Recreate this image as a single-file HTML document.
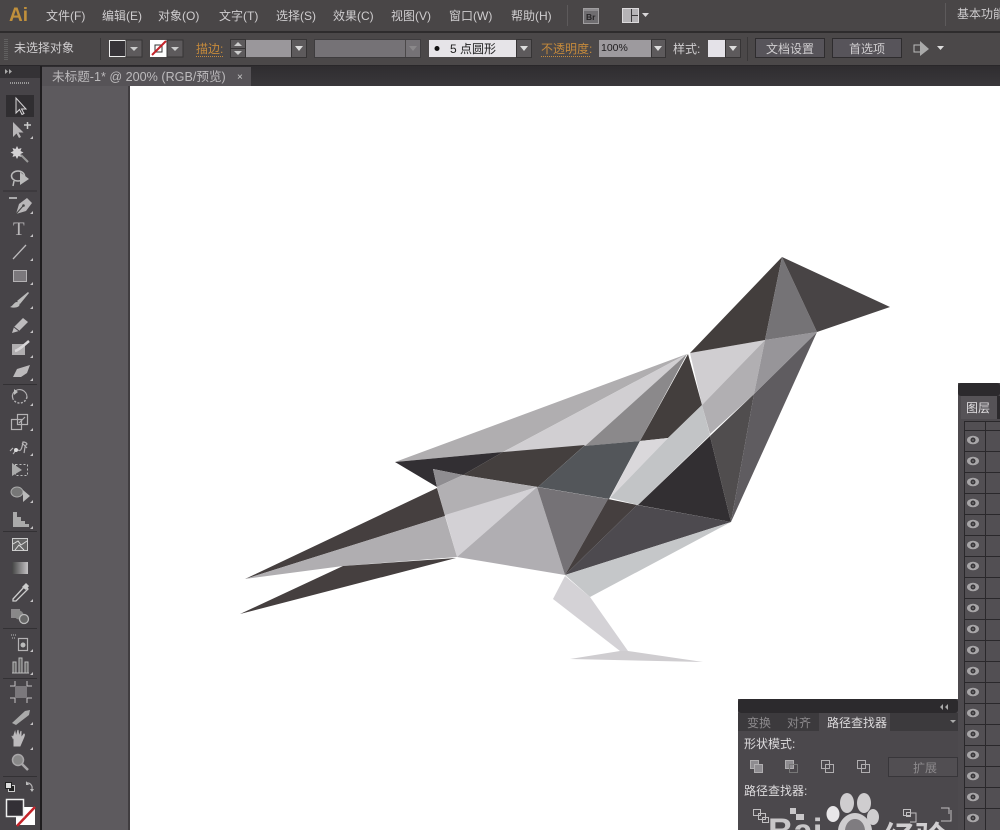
<!DOCTYPE html>
<html lang="zh"><head><meta charset="utf-8"><title>Illustrator</title>
<style>
html,body{margin:0;padding:0;background:#fff;width:1000px;height:830px;overflow:hidden}
svg{display:block}
text{font-family:"Liberation Sans","Noto Sans CJK SC",sans-serif;font-size:12px;fill:#cfcdcf}
.t{fill:#8c898c}
.o{fill:#c58a3c}
.s{fill:none;stroke:#b4b2b4;stroke-width:1.2}
</style></head><body>
<svg width="1000" height="830" viewBox="0 0 1000 830" xmlns="http://www.w3.org/2000/svg">
<!-- canvas -->
<rect width="1000" height="830" fill="#fff"/>
<rect x="42" y="86" width="88" height="744" fill="#5d5a5e"/>
<rect x="128" y="86" width="2" height="744" fill="#403d40"/>
<!-- menu bar -->
<rect width="1000" height="32" fill="#494647"/>
<rect y="31" width="1000" height="2" fill="#2e2c2d"/>
<text x="9" y="21" style="font-size:19px;font-weight:bold;fill:#c0903c">Ai</text>
<text x="46" y="20">文件(F)</text><text x="102" y="20">编辑(E)</text><text x="158" y="20">对象(O)</text><text x="219" y="20">文字(T)</text><text x="276" y="20">选择(S)</text><text x="333" y="20">效果(C)</text><text x="391" y="20">视图(V)</text><text x="449" y="20">窗口(W)</text><text x="511" y="20">帮助(H)</text>
<rect x="567" y="5" width="1" height="21" fill="#5d5a5b"/>
<rect x="583.500" y="8.500" width="15" height="15" fill="#6f6d70" stroke="#a09ea0"/>
<rect x="584" y="9" width="14" height="2" fill="#8e8c8f"/>
<text x="586" y="20" style="font-size:8.500px;font-weight:bold;fill:#262426">Br</text>
<rect x="622.500" y="8.500" width="16" height="14" fill="#b5b3b6" stroke="#dcdadc"/>
<path d="M631.500 9v13M632 15.500h6" stroke="#3a383a" fill="none"/>
<path d="M642 13h7l-3.500 4z" fill="#d8d6d8"/>
<rect x="945" y="3" width="1" height="23" fill="#5d5a5b"/>
<text x="957" y="18">基本功能</text>
<!-- control bar -->
<rect y="33" width="1000" height="32" fill="#4b4849"/>
<rect y="65" width="1000" height="1.500" fill="#29272a"/>
<path d="M5 39v21M7 39v21" stroke="#777" stroke-dasharray="1 1" fill="none"/>
<text x="14" y="52">未选择对象</text>
<rect x="100" y="38" width="1" height="22" fill="#3a3839"/>
<rect x="109.500" y="40.500" width="16" height="16" fill="#363338" stroke="#eee"/>
<rect x="126" y="40" width="16" height="17" fill="#5d5a5c" stroke="#363435"/><path d="M130 47h8l-4 4z" fill="#ccc"/>
<rect x="150" y="40" width="17" height="17" fill="#fff"/><rect x="155" y="45" width="7" height="7" fill="none" stroke="#333"/><path d="M152 55L166 41" stroke="#c4242a" stroke-width="2"/>
<rect x="167" y="40" width="16" height="17" fill="#5d5a5c" stroke="#363435"/><path d="M171 47h8l-4 4z" fill="#ccc"/>
<text x="196" y="53" class="o">描边:</text>
<path d="M196 56.500h28" stroke="#c58a3c" stroke-dasharray="1 1"/>
<rect x="230.500" y="39.500" width="15" height="18" fill="#5d5a5c" stroke="#363435"/><path d="M234 46l4-4 4 4zM234 51l4 4 4-4z" fill="#ccc"/><path d="M231 48.500h14" stroke="#363435"/>
<rect x="246" y="40" width="45" height="17" fill="#9a979b"/>
<rect x="291.500" y="39.500" width="15" height="18" fill="#5d5a5c" stroke="#363435"/><path d="M295 46h8l-4 5z" fill="#ddd"/>
<rect x="314.500" y="39.500" width="106" height="18" fill="#757276" stroke="#3e3c3e"/><rect x="405" y="40" width="1" height="17" fill="#4b4849"/><path d="M409 46h8l-4 5z" fill="#8a888a"/>
<rect x="429" y="40" width="87" height="17" fill="#e6e4e8"/>
<circle cx="437" cy="48.500" r="2.500" fill="#111"/>
<text x="450" y="53" style="fill:#222">5 点圆形</text>
<rect x="516.500" y="39.500" width="15" height="18" fill="#5d5a5c" stroke="#363435"/><path d="M520 46h8l-4 5z" fill="#ddd"/>
<text x="541" y="53" class="o">不透明度:</text>
<path d="M541 56.500h50" stroke="#c58a3c" stroke-dasharray="1 1"/>
<rect x="599" y="40" width="52" height="17" fill="#9d9a9e"/>
<text x="601" y="51" style="font-size:10.500px;fill:#1e1c1e">100%</text>
<rect x="651.500" y="39.500" width="14" height="18" fill="#5d5a5c" stroke="#363435"/><path d="M654 46h8l-4 5z" fill="#ddd"/>
<text x="673" y="53">样式:</text>
<rect x="708" y="40" width="17" height="17" fill="#e4e2e8"/>
<rect x="725.500" y="39.500" width="15" height="18" fill="#5d5a5c" stroke="#363435"/><path d="M729 46h8l-4 5z" fill="#ddd"/>
<rect x="747" y="37" width="1" height="24" fill="#3a3839"/>
<rect x="755.500" y="38.500" width="69" height="19" fill="#57545a" stroke="#2e2c2e"/>
<text x="766" y="53">文档设置</text>
<rect x="832.500" y="38.500" width="69" height="19" fill="#57545a" stroke="#2e2c2e"/>
<text x="849" y="53">首选项</text>
<rect x="914" y="45" width="7" height="7" fill="none" stroke="#bbb"/><path d="M920 41l9 8-9 7z" fill="#aaa"/><path d="M937 46h7l-3.500 4z" fill="#ddd"/>
<!-- doc tab row -->
<defs><linearGradient id="d" x1="0" y1="0" x2="0" y2="1"><stop offset="0" stop-color="#2f2d30"/><stop offset="1" stop-color="#39373a"/></linearGradient></defs>
<rect y="66" width="1000" height="20" fill="url(#d)"/>
<rect x="42" y="67" width="209" height="19" fill="#565357"/>
<text x="52" y="81" style="font-size:12.600px;fill:#bcbabc">未标题-1* @ 200% (RGB/预览)</text>
<text x="237" y="80" style="font-size:10px;fill:#ccc">×</text>
<!-- toolbar -->
<rect y="66" width="40" height="764" fill="#474448"/>
<rect y="66" width="40" height="12" fill="#343235"/>
<path d="M5 69l3 2.500-3 2.500zM9 69l3 2.500-3 2.500z" fill="#aaa"/>
<rect x="40" y="66" width="2" height="764" fill="#1f1d1f"/>
<path d="M10 83h19" stroke="#999" stroke-dasharray="1 1" stroke-width="2"/>
<rect x="6" y="95" width="28" height="22" fill="#302e31"/>
<path d="M16 98v15l3.500-3.500 2.500 5 2-1-2.500-4.500h4.500z" fill="#3b393c" stroke="#d8d6d8"/>
<path d="M13 122v15l3.500-3.500 2.500 4.500 2-1-2.500-4.500h5z" fill="#b8b6b8"/><path d="M24 125h7M27.500 122v7" stroke="#ccc" stroke-width="1.500"/>
<path d="M17 146l1.500 3 3-1-1 3 3 1.500-3 1.500 1 3-3-1-1.500 3-1.500-3-3 1 1-3-3-1.500 3-1.500-1-3 3 1z" fill="#d4d2d4"/><path d="M21 155l7 7" stroke="#999" stroke-width="2"/>
<ellipse cx="18" cy="176" rx="6.500" ry="5" fill="none" stroke="#bbb" stroke-width="1.500"/><path d="M20 172l9 7-9 6z" fill="#bbb"/><path d="M14 181l-1 5" stroke="#bbb" stroke-width="1.500"/>
<rect x="3" y="190.500" width="34" height="1" fill="#333134"/>
<path d="M9 198h8" stroke="#ccc" stroke-width="1.500"/><path d="M16 214l3-10 8-6 5 5-6 8z" fill="#b8b6b8"/><path d="M16 214l7-8" stroke="#444"/><circle cx="23.500" cy="205.500" r="1.300" fill="#444"/>
<text x="13" y="235" style="font-family:'Liberation Serif',serif;font-size:19px;fill:#b8b6b8">T</text>
<path d="M13 259l13-14" stroke="#bdbbbd" stroke-width="1.300"/>
<rect x="13.500" y="270.500" width="13" height="11" fill="#7b787c" stroke="#b4b2b4"/>
<path d="M28 292l1 1-9 11-3-3zM17 302c3 0 3 3 2 4-2 2-6 2-9 1 3-1 4-5 7-5z" fill="#bbb"/>
<path d="M12 333l2-6 9-9 5 4-9 9z" fill="#bdbbbd"/><path d="M14 327l5 4" stroke="#474448"/>
<path d="M12 344h13v11H12z" fill="#b0aeb0"/><path d="M15 351c4-1 8-5 14-10" stroke="#d8d6d8" stroke-width="2.500" fill="none"/>
<path d="M13 377l4-8 13-4-3 8-6 4z" fill="#bcbabc"/>
<rect x="3" y="384" width="34" height="1" fill="#333134"/>
<path d="M14 392a7.500 7.500 0 0 1 13 5" class="s"/><path d="M27 397a7.500 7.500 0 0 1-14 2" fill="none" stroke="#b4b2b4" stroke-width="1.400" stroke-dasharray="2 1.500"/><path d="M13 399a7 7 0 0 1 1-7" class="s"/><path d="M14 389l4 3-4 3z" fill="#bbb"/>
<rect x="11.500" y="419.500" width="10" height="10" class="s"/><rect x="17.500" y="414.500" width="10" height="10" class="s"/><path d="M19 423l6-6" class="s"/>
<path d="M13 454c3-3 2-6 5-4 3 2 4-2 5-8 1 0 3 0 4 2-3 2-2 6-3 9" class="s" stroke-width="2"/><circle cx="16" cy="450" r="2" fill="#ddd"/><path d="M10 451l3-3M22 443l5 5" class="s"/>
<rect x="15.500" y="464.500" width="12" height="11" fill="none" stroke="#bbb" stroke-dasharray="2 2"/><path d="M12 463l10 7-10 6z" fill="#aaa"/>
<ellipse cx="17" cy="492" rx="6" ry="5" fill="#777" stroke="#aaa"/><path d="M23 490l7 6-7 6z" fill="#bbb"/>
<path d="M13 512h4v15h-4zM17 517h4v10h-4zM21 521h4v6h-4zM25 524h4v3h-4z" fill="#aaa"/>
<rect x="3" y="531" width="34" height="1" fill="#333134"/>
<rect x="12.500" y="538.500" width="15" height="12" fill="#666" stroke="#ccc"/><path d="M13 544l5-3 3 4 6-4M15 550l4-5 5 5" stroke="#ddd" fill="none"/>
<defs><linearGradient id="g"><stop offset="0" stop-color="#444"/><stop offset="1" stop-color="#c4c2c4"/></linearGradient></defs>
<rect x="12" y="562" width="16" height="12" fill="url(#g)"/>
<path d="M13 599l12-13 3 3-12 12-3 0z" fill="none" stroke="#ccc" stroke-width="1.300"/><path d="M22 587l4-4 3 3-3 4z" fill="#ccc"/>
<rect x="11" y="609" width="9" height="9" fill="#8a888a"/><circle cx="19" cy="615" r="4.500" fill="#888"/><circle cx="24" cy="619" r="4.500" fill="#666" stroke="#bbb" stroke-width="1.300"/>
<rect x="3" y="628" width="34" height="1" fill="#333134"/>
<rect x="18.500" y="638.500" width="9" height="12" class="s"/><circle cx="23" cy="645" r="2.500" fill="#bbb"/><path d="M11 635h6M12 638h4" stroke="#bbb" stroke-dasharray="1 1"/>
<path d="M13 673v-11h3v11zM19 673v-15h3v15zM25 673v-11h3v11z" fill="#666" stroke="#bbb"/><path d="M12 673h17" stroke="#bbb"/>
<rect x="3" y="678" width="34" height="1" fill="#333134"/>
<rect x="15" y="686" width="12" height="12" fill="#7b787c"/><path d="M10 686h22M10 698h22M15 681v22M27 681v22" stroke="#c4c2c4" stroke-dasharray="5 12"/>
<path d="M12 723l13-12 5-1-1 5-13 10z" fill="#aaa"/>
<path d="M14 738c-3-2-2-3-1 0l2-6 1 5 2-7 1 7 2-6v7l3-4c1 0 0 3-1 5l-3 7h-6z" fill="#bcbabc" stroke="#bcbabc"/>
<circle cx="18" cy="760" r="5.500" fill="#888" stroke="#a8a6a8" stroke-width="1.500"/><path d="M22 764l6 6" stroke="#a8a6a8" stroke-width="2.500"/>
<rect x="3" y="776" width="34" height="1" fill="#333134"/>
<!-- flyout corner marks -->
<path fill="#c4c2c4" d="M33 136v3h-3zM33 211v3h-3zM33 234v3h-3zM33 258v3h-3zM33 282v3h-3zM33 306v3h-3zM33 330v3h-3zM33 355v3h-3zM33 378v3h-3zM33 403v3h-3zM33 428v3h-3zM33 453v3h-3zM33 500v3h-3zM33 526v3h-3zM33 599v3h-3zM33 649v3h-3zM33 672v3h-3zM33 722v3h-3zM33 747v3h-3z"/>
<rect x="8.500" y="785.500" width="6" height="6" fill="#222" stroke="#ccc"/><rect x="5.500" y="782.500" width="6" height="6" fill="#ddd" stroke="#222"/>
<path d="M26 783a5 5 0 0 1 6 6" class="s"/><path d="M26 781v4h3zM30 789h4l-2 3z" fill="#bbb"/>
<rect x="16" y="807" width="19" height="18" fill="#fff"/><path d="M17 826l18-19" stroke="#c4242a" stroke-width="2.500"/>
<rect x="6.500" y="799.500" width="17" height="17" fill="#333036" stroke="#eee" stroke-width="1.500"/>
<!-- bird -->
<g shape-rendering="geometricPrecision">
<path d="M395 462L687 354 503 452z" fill="#b0aeb0"/>
<path d="M503 452L687 354 585 446z" fill="#d1cfd2"/>
<path d="M585 446L687 354 640 441z" fill="#8b898b"/>
<path d="M640 441L688 354 702 405 668 438z" fill="#433e3d"/>
<path d="M395 462L503 452 463 475 433 469 437 487z" fill="#322f33"/>
<path d="M503 452L585 445 538 487 463 475z" fill="#443f3e"/>
<path d="M584 446L640 441 609 499 538 487z" fill="#53565a"/>
<path d="M640 441L668 438 610 498z" fill="#dad8db"/>
<path d="M702 405L710 435 638 505 610 498 668 438z" fill="#c2c4c6"/>
<path d="M710 436L731 522 638 505z" fill="#322f32"/>
<path d="M710 436L754 394 731 522z" fill="#504d4e"/>
<path d="M817 332L731 522 754 394z" fill="#5f5c60"/>
<path d="M690 353L765 340 702 405z" fill="#d0ced1"/>
<path d="M765 340L754 394 710 434 702 405z" fill="#b1afb2"/>
<path d="M765 340L817 332 754 394z" fill="#979599"/>
<path d="M690 353L782 257 765 340z" fill="#433e3d"/>
<path d="M782 257L817 332 765 340z" fill="#757376"/>
<path d="M782 257L890 307 817 332z" fill="#484445"/>
<path d="M433 469L463 475 437 487z" fill="#8f8d91"/>
<path d="M463 475L537 487 445 516 437 487z" fill="#b2b0b3"/>
<path d="M445 515L537 487 457 557z" fill="#d3d1d5"/>
<path d="M537 487L457 557 565 575z" fill="#b0aeb2"/>
<path d="M537 487L608 499 565 575z" fill="#757276"/>
<path d="M608 499L637 505 565 575z" fill="#453f3f"/>
<path d="M637 505L731 522 565 575z" fill="#4d4a4f"/>
<path d="M731 522L565 575 590 597z" fill="#c5c7c9"/>
<path d="M565 576L553 599 620 651 628 651 590 597z" fill="#d4d2d6"/>
<path d="M570 659L620 651 628 651 703 662z" fill="#cfcdd0"/>
<path d="M245 579L437 488 445 516z" fill="#453f3f"/>
<path d="M245 579L445 516 457 557 343 566z" fill="#b0aeb1"/>
<path d="M240 614L343 566 456 558z" fill="#453f3f"/>
</g>
<!-- right layers panel -->
<rect x="958" y="383" width="42" height="447" fill="#4d4a4e"/>
<rect x="958" y="383" width="42" height="13" rx="3" fill="#2c2a2d"/>
<rect x="961" y="396" width="36" height="23" fill="#565357"/>
<rect x="997" y="396" width="3" height="23" fill="#2c2a2d"/>
<text x="966" y="412" style="fill:#e0dee0">图层</text>
<rect x="964" y="421" width="36" height="409" fill="#524f53"/>
<path d="M964.500 421v409M985.500 421v409" stroke="#2a282b"/>
<path d="M964 421.500h36M964 430.500h36M964 451.500h36M964 472.500h36M964 493.500h36M964 514.500h36M964 535.500h36M964 556.500h36M964 577.500h36M964 598.500h36M964 619.500h36M964 640.500h36M964 661.500h36M964 682.500h36M964 703.500h36M964 724.500h36M964 745.500h36M964 766.500h36M964 787.500h36M964 808.500h36" stroke="#2a282b"/>
<defs><g id="e"><ellipse rx="6" ry="4.300" fill="#a8a6a8"/><circle r="2.500" fill="#383639"/><circle r="0.800" fill="#8a888a"/></g></defs>
<use href="#e" x="973" y="440"/><use href="#e" x="973" y="461"/><use href="#e" x="973" y="482"/><use href="#e" x="973" y="503"/><use href="#e" x="973" y="524"/><use href="#e" x="973" y="545"/><use href="#e" x="973" y="566"/><use href="#e" x="973" y="587"/><use href="#e" x="973" y="608"/><use href="#e" x="973" y="629"/><use href="#e" x="973" y="650"/><use href="#e" x="973" y="671"/><use href="#e" x="973" y="692"/><use href="#e" x="973" y="713"/><use href="#e" x="973" y="734"/><use href="#e" x="973" y="755"/><use href="#e" x="973" y="776"/><use href="#e" x="973" y="797"/><use href="#e" x="973" y="818"/>
<!-- pathfinder panel -->
<rect x="738" y="699" width="220" height="131" fill="#4b484c"/>
<rect x="738" y="699" width="220" height="14" rx="3" fill="#2c2a2d"/>
<rect x="738" y="713" width="220" height="18" fill="#3c3a3d"/>
<path d="M940 707l3-3v6zM945 707l3-3v6z" fill="#aaa"/>
<rect x="819" y="713" width="71" height="19" fill="#4b484c"/>
<text x="747" y="727" class="t">变换</text><text x="787" y="727" class="t">对齐</text><text x="827" y="727" style="fill:#dddbdd">路径查找器</text>
<path d="M950 720h6l-3 3z" fill="#aaa"/>
<text x="744" y="748" style="fill:#dddbdd">形状模式:</text>
<g fill="#8e8c90" stroke="#b0aeb0">
<rect x="750.500" y="760.500" width="8" height="8"/><rect x="754.500" y="764.500" width="8" height="8"/>
<rect x="785.500" y="760.500" width="8" height="8"/>
</g>
<rect x="789.500" y="764.500" width="8" height="8" fill="none" stroke="#777"/>
<g fill="none" stroke="#b0aeb0">
<rect x="821.500" y="760.500" width="8" height="8"/><rect x="825.500" y="764.500" width="8" height="8"/>
<rect x="857.500" y="760.500" width="8" height="8"/><rect x="861.500" y="764.500" width="8" height="8"/>
</g>
<rect x="888.500" y="757.500" width="69" height="19" fill="#514e52" stroke="#38363a"/>
<text x="913" y="772" class="t">扩展</text>
<text x="744" y="795" style="fill:#dddbdd">路径查找器:</text>
<g fill="none" stroke="#c0bec0">
<rect x="753.500" y="809.500" width="7" height="6"/><rect x="758.500" y="813.500" width="7" height="6"/><rect x="762.500" y="817.500" width="6" height="5"/>
<rect x="903.500" y="809.500" width="7" height="6"/><rect x="906.500" y="812.500" width="4" height="4"/><path d="M911 813h5v9h-6"/>
<path d="M941 808h8v6M951 810v11h-10"/>
</g>
<rect x="790" y="808" width="6" height="6" fill="#c8c6c8"/><rect x="796" y="814" width="8" height="6" fill="#c8c6c8"/>
<!-- watermark -->
<g fill="#cfcdcf">
<ellipse cx="847" cy="803" rx="7" ry="10"/><ellipse cx="864" cy="803" rx="7" ry="10"/>
<ellipse cx="833" cy="814" rx="6.500" ry="8" fill="#e8e6e8"/><ellipse cx="873" cy="817" rx="6" ry="8"/>
<path d="M855 813c-9 0-17 9-17 18h34c0-9-8-18-17-18z"/>
</g>
<path d="M855 819c-6 0-10 6-10 12h20c0-6-4-12-10-12z" fill="#7f7c80"/>
<text x="768" y="843" style="font-size:35px;font-weight:bold;fill:#c8c6c8">Bai</text>
<text x="883" y="849" style="font-size:32px;font-weight:bold;fill:#d0ced0">经验</text>
</svg>
</body></html>
